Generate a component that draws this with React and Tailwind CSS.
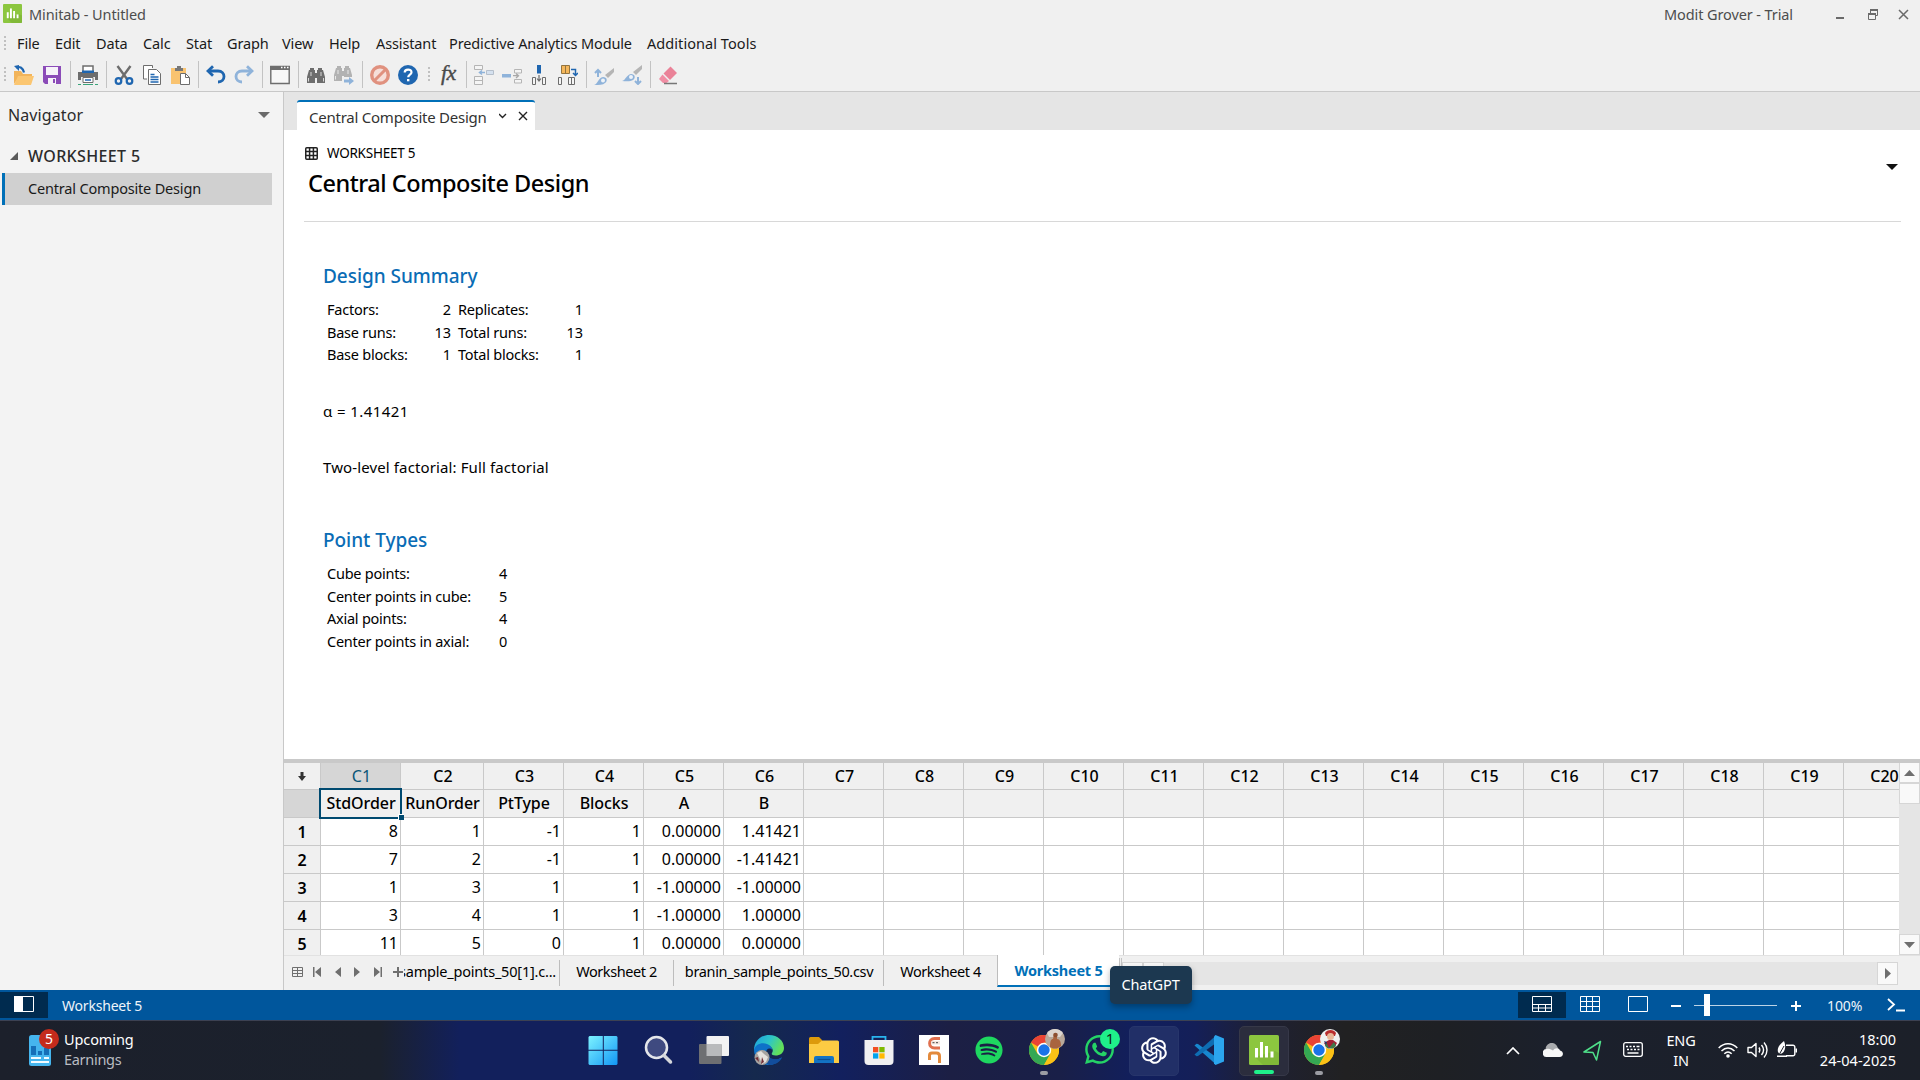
import { AiOutlineOpenAI } from "react-icons/ai";
import { FaSpotify, FaWhatsapp } from "react-icons/fa";

/* ---------- title bar, menu ---------- */

function MinitabLogo({ className }) {
  return (
    <svg viewBox="0 0 30 30" className={className}>
      <rect width="30" height="30" rx="1.5" fill="#8cc63f" />
      <path d="M6 22l8 8h16V18l-4-2z" fill="#79b133" opacity="0.6" />
      <g fill="#fff">
        <rect x="6" y="13" width="3" height="9.5" />
        <rect x="11" y="7" width="3" height="15.5" />
        <rect x="16" y="11" width="3" height="11.5" />
        <rect x="21.500" y="16.500" width="3" height="6" />
      </g>
    </svg>
  );
}

function TitleBar() {
  return (
    <div className="flex h-[29px] shrink-0 items-center bg-[#f0f0f0] pl-[3px] text-[14.5px] tracking-[-0.1px] text-[#4d4d4d]">
      <MinitabLogo className="mt-[-2px] size-[19px]" />
      <span className="ml-[7px]">Minitab - Untitled</span>
      <span className="mr-[42px] ml-auto">Modit Grover - Trial</span>
      <svg width="76" height="16" viewBox="0 0 76 16" className="mr-[9px]" fill="none" stroke="#6a6a6a">
        <path d="M1 11h8" strokeWidth="2" />
        <path d="M33.500 6.500h7v6h-7zM35.500 6V2.500h7v6H41" />
        <path d="M33 7h8M35 3h8" strokeWidth="2" />
        <path d="M64 3l9 9M73 3l-9 9" strokeWidth="1.500" />
      </svg>
    </div>
  );
}

const MENU = [
  ["File", "w-[38px]"],
  ["Edit", "w-[41px]"],
  ["Data", "w-[47px]"],
  ["Calc", "w-[43px]"],
  ["Stat", "w-[41px]"],
  ["Graph", "w-[55px]"],
  ["View", "w-[47px]"],
  ["Help", "w-[47px]"],
  ["Assistant", "w-[73px]"],
  ["Predictive Analytics Module", "w-[198px]"],
  ["Additional Tools", "w-[120px] tracking-[0.06px]"],
];

function Grip({ className }) {
  return (
    <span className={className}>
      <svg width="2" height="14" viewBox="0 0 2 14" fill="#c0c0c0">
        <path d="M0 0h2v2H0zM0 4h2v2H0zM0 8h2v2H0zM0 12h2v2H0z" />
      </svg>
    </span>
  );
}

function MenuBar() {
  return (
    <div className="flex h-[30px] shrink-0 items-center bg-[#f0f0f0] pl-1 text-[14.5px] tracking-[-0.13px] text-[#1a1a1a]">
      <Grip className="mt-[-2px] w-[13px]" />
      {MENU.map(([label, width]) => (
        <span key={label} className={`${width} shrink-0 whitespace-nowrap`}>
          {label}
        </span>
      ))}
    </div>
  );
}

/* ---------- toolbar ---------- */

const BLUE = "#1f66b0";
const SOFT = "#8fb3da";
const GRAY = "#6d6d6d";

const ICONS = {
  open: (
    <>
      <path d="M0 19V6h7l2 3h9v3H5z" fill="#f2b45a" />
      <path d="M4 11h16l-3 9H0z" fill="#fbc671" />
      <path d="M2 2.500c4-1.500 7 .5 8 5" stroke={BLUE} strokeWidth="2.200" fill="none" />
      <path d="M0 1l5-1v6z" fill={BLUE} />
    </>
  ),
  save: (
    <>
      <path d="M1 1h18v18H3l-2-2z" fill="#8b4bb8" />
      <path d="M4 2h12v8H4z" fill="#f6f2f9" />
      <path d="M6 13h8v6H6z" fill="#f6f2f9" />
      <path d="M11 14h2v4h-2z" fill="#8b4bb8" />
    </>
  ),
  print: (
    <>
      <path d="M5 6V1h10v5" fill="#fff" stroke={GRAY} strokeWidth="1.500" />
      <path d="M0 7h20v8h-3v-3H3v3H0z" fill={GRAY} />
      <path d="M4 5.500h12V8H4z" fill={BLUE} />
      <path d="M5 12.500h10v5H5z" fill="#fff" stroke={GRAY} />
      <path d="M7 15h6" stroke={BLUE} strokeWidth="1.500" />
      <path d="M0 19.500h3M5 19.500h10M17 19.500h3" stroke="#3aa37a" />
    </>
  ),
  cut: (
    <>
      <path d="M3.500 1l9.500 13M16.500 1L7 14" stroke={GRAY} strokeWidth="2.400" fill="none" />
      <circle cx="4.500" cy="16" r="2.800" stroke={BLUE} strokeWidth="2.200" fill="none" />
      <circle cx="15.500" cy="16" r="2.800" stroke={BLUE} strokeWidth="2.200" fill="none" />
    </>
  ),
  copy: (
    <>
      <path d="M5 14H1.500V.5h9V3" stroke={GRAY} fill="#fff" />
      <path d="M6.500 4.500h8l4 4v11h-12z" stroke={GRAY} fill="#fff" />
      <path d="M8.500 9.500h4M8.500 12h8M8.500 14.500h8M8.500 17h8" stroke={BLUE} strokeWidth="1.300" />
    </>
  ),
  paste: (
    <>
      <path d="M1 3h15v16H1z" fill="#f9c370" />
      <path d="M5 3h2V1h4v2h2v3H5z" fill="#777" />
      <path d="M10.500 8.500h5l4 4v7h-9z" fill="#fff" stroke={GRAY} />
      <path d="M15.500 8.500v4h4" fill="none" stroke={GRAY} />
    </>
  ),
  undo: (
    <>
      <path d="M2.500 6H12c8 0 8 11 0 11" stroke={BLUE} strokeWidth="2.800" fill="none" />
      <path d="M7 1.200L2 6l5 4.800" stroke={BLUE} strokeWidth="2.800" fill="none" />
    </>
  ),
  redo: (
    <>
      <path d="M17.500 6H8c-8 0-8 11 0 11" stroke={SOFT} strokeWidth="2.800" fill="none" />
      <path d="M13 1.200L18 6l-5 4.800" stroke={SOFT} strokeWidth="2.800" fill="none" />
    </>
  ),
  window: (
    <>
      <path d="M.8 1.500h18.400v17H.8z" fill="#f7f7f7" stroke={GRAY} strokeWidth="1.400" />
      <path d="M0 1h20v4H0z" fill={GRAY} />
      <path d="M11 2.500h1.500M14 2.500h1.500M17 2.500h1.500" stroke="#fff" strokeWidth="1.300" />
    </>
  ),
  find: (
    <g fill={GRAY}>
      <path d="M4 3h4v2h1v13H1v-6l2-7h1zM12 3h4v2h1l2 7v6h-8V5h1z" />
      <path d="M8 8h4v5H8z" />
      <path d="M2.500 13v3.500M17.500 13v3.500M5 7v4M15 7v4" stroke="#d8d8d8" />
    </g>
  ),
  findNext: (
    <>
      <g fill="#b2b2b2">
        <path d="M3 1h4v2h1v13H0v-6l2-7h1zM11 1h4v2h1l2 7v2h-8V3h1z" />
        <path d="M7 6h4v5H7z" />
        <path d="M4 5v4M14 5v4M1.500 11v3.500" stroke="#e8e8e8" />
      </g>
      <path d="M10 14.500h5V12l5 4-5 4v-2.500h-5z" fill={SOFT} />
    </>
  ),
  stop: (
    <>
      <circle cx="10" cy="10" r="8.300" fill="#f6ded9" stroke="#e0917f" strokeWidth="3.400" />
      <path d="M4.500 15.500l11-11" stroke="#e0917f" strokeWidth="3" />
    </>
  ),
  help: (
    <>
      <circle cx="10" cy="10" r="10" fill={BLUE} />
      <path d="M6.700 7.600c0-4 6.800-4 6.800-.3 0 2.500-3.300 2.300-3.300 5" stroke="#fff" strokeWidth="2.200" fill="none" />
      <path d="M9 14h2.400v2.300H9z" fill="#fff" />
    </>
  ),
  i1: (
    <>
      <path d="M.5.500h8v4h-8zM.5 11.500h8v8h-8zM.5 15.500h8" fill="#f5f5f5" stroke="#b5b5b5" />
      <path d="M12.500 5.500h7v4h-7z" fill="#d5e1ef" stroke="#b5bfcb" />
      <path d="M6 7.500h5M8 5.500l-2.500 2 2.500 2" stroke={SOFT} strokeWidth="1.500" fill="none" />
    </>
  ),
  i2: (
    <>
      <path d="M0 9h9v3.500H0z" fill={SOFT} />
      <path d="M12.500 4.500h7v3.500h-7zM12.500 14.500h7V18h-7z" fill="#f5f5f5" stroke="#b5b5b5" />
      <path d="M11 10.700h5M14 8.500l2.500 2.200-2.500 2.200" stroke="#a8a8a8" strokeWidth="1.300" fill="none" />
    </>
  ),
  i3: (
    <>
      <path d="M7 0h4v8.500H7z" fill={BLUE} />
      <path d="M2.500 12.500h3v7h-3zM12.500 12.500h3v7h-3z" fill="#f5f5f5" stroke={GRAY} />
      <path d="M9 10v6M7 13.500L9 16l2-2.500" stroke={GRAY} strokeWidth="1.200" fill="none" />
    </>
  ),
  i4: (
    <>
      <path d="M3.500.5h8v8h-8zM7.500.5v8" fill="#f5b75b" stroke="#94753f" />
      <path d="M.5 12.500h3v7h-3zM10.500 12.500h6v7h-6zM13.500 12.500v7" fill="#f5f5f5" stroke={GRAY} />
      <path d="M13 4.500h4.500V10M15 8l2.500 2.500L20 8" stroke={BLUE} strokeWidth="1.500" fill="none" />
    </>
  ),
  i5: (
    <>
      <path d="M4 12V5M1 8l3-3 3 3" stroke={SOFT} strokeWidth="2" fill="none" />
      <path d="M20 3v4l-6 6-3-3z" fill="#b5b5b5" />
      <path d="M0 20c4-1 4-7 9-8 4 0 5 4 2 6-2 2-6 2-11 2z" fill={SOFT} />
      <circle cx="9" cy="15.500" r="2" fill="#eef3f8" />
    </>
  ),
  i6: (
    <>
      <path d="M20 0v4l-6 6-3-3z" fill="#b5b5b5" />
      <path d="M0 16c4-1 4-6 9-7 4 0 5 4 2 6-2 1.500-6 1.500-11 1z" fill={SOFT} />
      <circle cx="9" cy="12" r="2" fill="#eef3f8" />
      <path d="M16 12v7M13 16l3 3 3-3" stroke={SOFT} strokeWidth="2" fill="none" />
    </>
  ),
  erase: (
    <>
      <path d="M12.500 1.500L19 8l-7 7-6.500-6.500z" fill="#ea8298" />
      <path d="M4.500 9.500l6.500 6.500-2.500 2H5l-4-4z" fill="#f08ea4" />
      <path d="M6 18.500h13" stroke="#777" strokeWidth="1.500" />
    </>
  ),
};

const TOOLS = [
  "open", "save", "|", "print", "|", "cut", "copy", "paste", "|", "undo", "redo", "|", "window", "|",
  "find", "findNext", "|", "stop", "help", "grip", "fx", "|", "i1", "i2", "i3", "i4", "|", "i5", "i6", "|", "erase",
];

function Toolbar() {
  return (
    <div className="flex h-[33px] shrink-0 items-center border-b border-[#c8c8c8] bg-[#f0f0f0] pb-px pl-1">
      <Grip className="mt-[-2px] w-[10px]" />
      {TOOLS.map((name, i) => {
        if (name === "|") return <span key={i} className="h-[27px] w-2 border-l border-[#c3c3c3]" />;
        if (name === "grip") return <Grip key={i} className="mt-[-2px] w-3 pl-[2px]" />;
        if (name === "fx")
          return (
            <span key={i} className="mt-[-3px] mr-2 w-5 pl-[3px] font-['Liberation_Serif',serif] text-[22px] leading-5 tracking-[-0.5px] text-[#4a4a4a] italic [-webkit-text-stroke:0.4px]">
              fx
            </span>
          );
        return (
          <svg key={i} viewBox="0 0 20 20" className="mr-2 size-5 shrink-0">
            {ICONS[name]}
          </svg>
        );
      })}
    </div>
  );
}

/* ---------- navigator ---------- */

function Navigator() {
  return (
    <aside className="w-[284px] shrink-0 border-r border-[#c8c8c8] bg-[#f3f3f3]">
      <div className="flex h-[45px] items-center pl-2 text-base text-[#2b2b2b]">
        <span className="tracking-[0.1px]">Navigator</span>
        <svg width="12" height="6" className="mt-px mr-[13px] ml-auto" fill="#6a6a6a">
          <path d="M0 0h12L6 6z" />
        </svg>
      </div>
      <div className="mt-[4px] mb-[2px] flex h-[30px] items-center pl-[10px]">
        <svg width="8" height="8" fill="#5a5a5a">
          <path d="M8 0v8H0z" />
        </svg>
        <span className="ml-[10px] text-base font-medium tracking-[0.35px] text-[#2b2b2b]">WORKSHEET 5</span>
      </div>
      <div className="mr-[11px] ml-[2px] flex h-8 items-center border-l-3 border-[#0070b8] bg-[#d0d0d0] pl-[23px] text-[14.5px] tracking-[-0.18px] text-[#1a1a1a]">
        Central Composite Design
      </div>
    </aside>
  );
}

/* ---------- report ---------- */

const SUMMARY = [
  ["Factors:", "2", "Replicates:", "1"],
  ["Base runs:", "13", "Total runs:", "13"],
  ["Base blocks:", "1", "Total blocks:", "1"],
];
const POINTS = [
  ["Cube points:", "4"],
  ["Center points in cube:", "5"],
  ["Axial points:", "4"],
  ["Center points in axial:", "0"],
];

function Report() {
  return (
    <section className="flex h-[667px] shrink-0 flex-col bg-white text-black">
      <div className="flex h-[38px] shrink-0 items-end bg-[#e5e5e5] pl-[13px]">
        <div className="flex h-[30px] w-[238px] items-center rounded-t-[3px] border-t-2 border-[#0070b8] bg-white pl-3 text-[15px] tracking-[-0.24px] text-[#333]">
          <span className="mt-[3px] w-[190px] whitespace-nowrap">Central Composite Design</span>
          <svg width="30" height="10" viewBox="0 0 30 10" fill="none" stroke="#222" strokeWidth="1.400">
            <path d="M0 3l3.500 3.500L7 3" />
            <path d="M20 1l8 8M28 1l-8 8" />
          </svg>
        </div>
      </div>
      <div className="mr-[19px] ml-5 flex h-[92px] shrink-0 border-b border-[#d8d8d8]">
        <div className="pt-3">
          <div className="flex h-[22px] items-center pl-px">
            <svg width="13" height="13" viewBox="0 0 13 13" fill="none" stroke="#222" strokeWidth="1.500">
              <rect x="0.750" y="0.750" width="11.500" height="11.500" rx="1" />
              <path d="M4.600 1v11M8.400 1v11M1 4.600h11M1 8.400h11" />
            </svg>
            <span className="ml-[9px] text-[13.500px] tracking-[-0.25px]">WORKSHEET 5</span>
          </div>
          <h1 className="mt-px pl-1 text-[23.500px] leading-9 font-medium tracking-[-0.46px]">Central Composite Design</h1>
        </div>
        <svg width="12" height="7" className="mt-[34px] mr-[3px] ml-auto" fill="#111">
          <path d="M0 0h12L6 6z" />
        </svg>
      </div>
      <div className="pl-[39px] text-[14.5px] leading-[22.500px] tracking-[-0.24px]">
        <h2 className="mt-[40px] text-[19px] leading-7 font-medium tracking-[-0.04px] text-[#0a6cb5]">Design Summary</h2>
        <div className="mt-[8px] grid grid-cols-[94px_30px_7px_94px_31px] pl-1">
          {SUMMARY.map(([a, b, c, d]) => (
            <div key={a} className="contents">
              <span className="whitespace-nowrap">{a}</span>
              <span className="text-right tracking-normal">{b}</span>
              <span />
              <span className="whitespace-nowrap">{c}</span>
              <span className="text-right tracking-normal">{d}</span>
            </div>
          ))}
        </div>
        <p className="mt-[34px] text-[15px] tracking-[0.4px]">α = 1.41421</p>
        <p className="mt-[33.5px] text-[15px] tracking-[0.12px]">Two-level factorial: Full factorial</p>
        <h2 className="mt-[48px] text-[19px] leading-7 font-medium tracking-[-0.04px] text-[#0a6cb5]">Point Types</h2>
        <div className="mt-[8px] grid grid-cols-[152px_30px] pl-1">
          {POINTS.map(([a, b]) => (
            <div key={a} className="contents">
              <span className="whitespace-nowrap">{a}</span>
              <span className="pl-[20px]">{b}</span>
            </div>
          ))}
        </div>
      </div>
    </section>
  );
}

/* ---------- worksheet ---------- */

const COLUMNS = Array.from({ length: 20 }, (_, i) => `C${i + 1}`);
const NAMES = ["StdOrder", "RunOrder", "PtType", "Blocks", "A", "B"];
const ROWS = [
  ["8", "1", "-1", "1", "0.00000", "1.41421"],
  ["7", "2", "-1", "1", "0.00000", "-1.41421"],
  ["1", "3", "1", "1", "-1.00000", "-1.00000"],
  ["3", "4", "1", "1", "-1.00000", "1.00000"],
  ["11", "5", "0", "1", "0.00000", "0.00000"],
];
const colWidth = (i) => (i === 1 ? "w-[83px]" : "w-[80px]");

function Worksheet() {
  return (
    <div className="flex h-[196px] shrink-0 border-t-4 border-[#c9c9c9]">
      <div className="w-[1615px] shrink-0 overflow-hidden bg-white text-base text-black">
        <div className="flex h-[27px] w-max border-b border-[#c9c9c9] bg-[#f0f0f0] font-medium">
          <div className="flex w-[37px] items-center justify-center border-r border-[#c9c9c9]">
            <svg width="8" height="9" fill="#333">
              <path d="M2.500 0h3v4H8L4 9 0 4h2.500z" />
            </svg>
          </div>
          {COLUMNS.map((c, i) => (
            <div
              key={c}
              className={`${colWidth(i)} flex shrink-0 items-center justify-center border-r border-[#c9c9c9] pl-[2px] ${i === 0 ? "bg-[#d6d6d6] font-normal text-[#0b5577]" : ""}`}
            >
              {c}
            </div>
          ))}
        </div>
        <div className="flex h-7 w-max border-b border-[#c9c9c9] bg-[#f0f0f0] font-medium">
          <div className="w-[37px] border-r border-[#c9c9c9] bg-[#d6d6d6]" />
          {COLUMNS.map((c, i) => (
            <div
              key={c}
              className={`${colWidth(i)} relative flex shrink-0 items-center justify-center border-r border-[#c9c9c9] pb-[2px] pl-px tracking-[-0.07px]`}
            >
              {NAMES[i]}
              {i === 0 && (
                <>
                  <span className="absolute -inset-x-[2px] -top-[2px] -bottom-[2px] z-10 border-2 border-[#004a70]" />
                  <span className="absolute -right-[4px] -bottom-[3px] z-10 size-[6px] border-t border-l border-white bg-[#004a70]" />
                </>
              )}
            </div>
          ))}
        </div>
        {ROWS.map((row, r) => (
          <div key={r} className="flex h-7 w-max border-b border-[#c9c9c9]">
            <div className="flex w-[37px] items-center justify-center border-r border-[#c9c9c9] bg-[#f0f0f0] font-semibold">
              {r + 1}
            </div>
            {COLUMNS.map((c, i) => (
              <div key={c} className={`${colWidth(i)} flex shrink-0 items-center justify-end border-r border-[#c9c9c9] pr-[2px] pb-[2px]`}>
                {row[i]}
              </div>
            ))}
          </div>
        ))}
      </div>
      <div className="flex flex-1 flex-col bg-[#e5e5e5]">
        <div className="flex h-[20px] items-center justify-center border border-t-0 border-[#d6d6d6] bg-[#f9f9f9]">
          <svg width="11" height="6" fill="#6f6f6f">
            <path d="M0 6h11L5.500 0z" />
          </svg>
        </div>
        <div className="h-[21px] border border-[#d6d6d6] bg-[#f9f9f9]" />
        <div className="mt-auto flex h-[21px] items-center justify-center border border-[#d6d6d6] bg-[#f9f9f9]">
          <svg width="11" height="6" fill="#6f6f6f">
            <path d="M0 0h11L5.500 6z" />
          </svg>
        </div>
      </div>
    </div>
  );
}

function SheetTabs() {
  return (
    <div className="flex h-[35px] shrink-0 border-t border-[#e2e2e2] bg-[#f0f0f0] text-[14.5px] text-black">
      <svg width="112" height="34" viewBox="0 0 112 34" className="ml-[8px] shrink-0" fill="#6f6f6f">
        <path d="M.5 11.500h10v9h-10zM.5 14.500h10M.5 17.500h10M5.500 11.500v9" fill="none" stroke="#6f6f6f" />
        <path d="M21 11h1.500v10H21zM29 11v10l-6-5zM49 11v10l-6-5zM62 11v10l6-5zM82 11v10l6-5zM88.500 11H90v10h-1.500z" />
        <path d="M101 15h4v-4h2v4h4v2h-4v4h-2v-4h-4z" />
      </svg>
      <div className="my-1 flex w-[156px] items-center overflow-hidden border-r border-[#bdbdbd] pb-[2px] whitespace-nowrap">
        <span className="ml-[-5px] tracking-[-0.2px]">sample_points_50[1].c...</span>
      </div>
      <div className="my-1 flex w-[114px] items-center justify-center border-r border-[#bdbdbd] pb-[2px] tracking-[-0.42px]">Worksheet 2</div>
      <div className="my-1 flex w-[210px] items-center justify-center border-r border-[#bdbdbd] pb-[2px] pl-px tracking-[-0.34px]">
        branin_sample_points_50.csv
      </div>
      <div className="my-1 flex w-[113px] items-center justify-center pb-[2px] tracking-[-0.42px]">Worksheet 4</div>
      <div className="-mt-px mb-[3px] flex w-[122px] items-center justify-center border-b-2 border-l border-b-[#0070b8] border-l-[#bdbdbd] bg-white pt-[2px] text-[14.500px] font-bold tracking-[-0.25px] text-[#0070b8]">
        Worksheet 5
      </div>
      <div className="my-[2px] w-[3px] border-x border-[#c4c4c4]" />
      <div className="mt-[6px] flex h-[23px] w-[776px] shrink-0 bg-[#e5e5e5]">
        <div className="w-[21px] border border-[#d6d6d6] bg-[#f9f9f9]" />
        <div className="w-[21px] border border-[#d6d6d6] bg-[#f9f9f9]" />
        <div className="ml-auto flex w-[21px] items-center justify-center border border-[#d6d6d6] bg-[#f9f9f9]">
          <svg width="6" height="11" fill="#6f6f6f">
            <path d="M0 0v11l6-5.500z" />
          </svg>
        </div>
      </div>
    </div>
  );
}

/* ---------- status bar ---------- */

function StatusBar() {
  return (
    <div className="flex h-[30px] shrink-0 items-center bg-[#00569c] text-[14px] text-[#eef4fa]">
      <div className="flex h-[26px] w-12 items-center justify-center bg-[#002b4f] pb-[2px]">
        <svg width="20" height="16" viewBox="0 0 20 16">
          <path d="M.5.500h19v15H.5z" fill="none" stroke="#fff" />
          <path d="M0 0h9v16H0z" fill="#fff" />
        </svg>
      </div>
      <span className="ml-[14px] tracking-[-0.2px]">Worksheet 5</span>
      <div className="ml-auto flex h-[26px] w-12 items-center justify-center bg-[#002b4f] pb-[2px]">
        <svg width="20" height="16" viewBox="0 0 20 16" fill="none" stroke="#fff">
          <path d="M.5.500h19v15H.5zM0 8.500h20M0 12h20M6.500 8v8M13.500 8v8" />
        </svg>
      </div>
      <svg width="20" height="16" viewBox="0 0 20 16" fill="none" stroke="#fff" className="mb-[2px] ml-[14px]">
        <path d="M.5.500h19v15H.5zM0 5.500h20M0 10.500h20M6.500 0v16M12.500 0v16" />
      </svg>
      <svg width="20" height="16" viewBox="0 0 20 16" fill="none" stroke="#fff" className="mb-[2px] ml-7">
        <path d="M.5.500h19v15H.5z" />
      </svg>
      <span className="mt-[2px] ml-[23px] h-[2px] w-[10px] bg-white" />
      <div className="ml-[13px] flex w-[83px] items-center">
        <span className="h-px w-[10px] bg-[#bcd3e6]" />
        <span className="h-[22px] w-[6px] bg-white" />
        <span className="h-px flex-1 bg-[#bcd3e6]" />
      </div>
      <svg width="10" height="10" className="mt-[2px] ml-[14px]" fill="#fff">
        <path d="M4 0h2v4h4v2H6v4H4V6H0V4h4z" />
      </svg>
      <span className="ml-[26px] w-[60px] tracking-[-0.1px]">100%</span>
      <svg width="18" height="14" viewBox="0 0 18 14" className="mr-[15px]" fill="none" stroke="#fff">
        <path d="M1 1l6 5.500L1 12" strokeWidth="1.800" />
        <path d="M9 12.500h9" strokeWidth="2" />
      </svg>
    </div>
  );
}

/* ---------- taskbar ---------- */

function Chrome() {
  return (
    <svg viewBox="0 0 30 30" className="size-[30px]">
      <circle cx="15" cy="15" r="15" fill="#fbc116" />
      <path d="M15 15L2 7.500A15 15 0 0 1 28 7.500z" fill="#ea4335" />
      <path d="M28 7.500H15v8z" fill="#ea4335" />
      <path d="M2 7.500A15 15 0 0 0 15 30l6.500-11.200L8.500 18.700z" fill="#34a853" />
      <path d="M15 30A15 15 0 0 0 28 7.500H15l6.500 11.200z" fill="#fbc116" />
      <circle cx="15" cy="15" r="7.200" fill="#fff" />
      <circle cx="15" cy="15" r="5.700" fill="#1a73e8" />
    </svg>
  );
}

function AvatarWarm() {
  return (
    <svg viewBox="0 0 20 20" className="absolute top-[3px] right-[4px] size-5">
      <circle cx="10" cy="10" r="10" fill="#b8a89a" />
      <path d="M2 4a10 10 0 0 1 16 0l-3 4H4z" fill="#dcd5cf" />
      <path d="M5 18c0-6 1-8 3-8l1-5h3v5c3 0 4 3 4 7l-4 2.500H8z" fill="#a9643f" />
      <circle cx="10.500" cy="6" r="2.300" fill="#8d4f30" />
    </svg>
  );
}

function AvatarCool() {
  return (
    <svg viewBox="0 0 20 20" className="absolute top-[3px] right-[4px] size-5">
      <circle cx="10" cy="10" r="10" fill="#eef0f0" />
      <path d="M5 4c2-4 9-4 11 0l-1 3H6z" fill="#b92e2e" />
      <circle cx="10.500" cy="7.500" r="3.500" fill="#e8b798" />
      <path d="M4 14l5-3h4l4 3-3 5H7z" fill="#a32135" />
      <path d="M6 13l3 6 5-6 2 4-3 2.500H8L5 17z" fill="#3e7a4b" />
      <path d="M4 12l3 1-1 3z" fill="#27356b" />
    </svg>
  );
}

const APPS = [
  {
    key: "start",
    icon: (
      <svg viewBox="0 0 30 30" className="mr-[3px] size-[30px]">
        <defs>
          <linearGradient id="win" x1="0" y1="0" x2="1" y2="1" gradientUnits="objectBoundingBox">
            <stop offset="0" stopColor="#7df3ff" />
            <stop offset="1" stopColor="#1296f5" />
          </linearGradient>
        </defs>
        <path d="M1.500 1h13.300v13.800H.5V2zM15.800 1h12.700l1 1v12.800H15.800zM.5 15.800h14.300V30H1.500l-1-1zM15.800 15.800h13.700V29l-1 1H15.800z" fill="url(#win)" />
      </svg>
    ),
  },
  {
    key: "search",
    icon: (
      <svg viewBox="0 0 30 30" className="mr-px size-[30px]">
        <circle cx="12.500" cy="12.500" r="10.500" fill="#3f4a80" stroke="#e4e6ea" strokeWidth="2.500" />
        <path d="M20 20.500l6.500 6.500" stroke="#d5d7db" strokeWidth="3.500" strokeLinecap="round" />
      </svg>
    ),
  },
  {
    key: "tasks",
    icon: (
      <svg viewBox="0 0 30 30" className="size-[30px]">
        <rect x="7.500" y="1" width="22.500" height="20" rx="1" fill="#f2f2f3" />
        <rect x="0" y="9" width="22.500" height="20" rx="1" fill="#6e6f72" />
        <path d="M7.500 9h15v12h-15z" fill="#b9babc" />
      </svg>
    ),
  },
  {
    key: "edge",
    icon: (
      <svg viewBox="0 0 30 30" className="size-[30px]">
        <defs>
          <linearGradient id="edge" x1="0" y1="0" x2="1" y2="0.400">
            <stop offset="0" stopColor="#1b9fe0" />
            <stop offset="0.550" stopColor="#2ec6c6" />
            <stop offset="1" stopColor="#62e05a" />
          </linearGradient>
        </defs>
        <path d="M0 15C0 6 7 0 15 0c9 0 15 6 15 13 0 5-4 7.500-8.500 7.500-3 0-4.500-1-3.500-2.500 2-3 0-7-5-7C6 11 1 15 0 15z" fill="url(#edge)" />
        <path d="M0 15c1-5 7-8 13-6 3 1 5 3 5.300 6-3-3-6.300-1-6.300 3 1 6 9 9 16 4-3 5-8 8-13 8C7 30 0 23 0 15z" fill="#0e72c8" />
        <path d="M12 17c1 6 8 9 16 6-3 5-8 7-13 7-5-2-7-8-3-13z" fill="#124d9c" />
        <circle cx="8" cy="22.500" r="7.500" fill="#a6a3a0" />
        <path d="M3 18l4-2 3 3 4 3-2 5-4 2-2-5z" fill="#e4e1dd" />
        <path d="M1 23l3-1 1 5zM8 22l2 5-3 2z" fill="#722f36" />
      </svg>
    ),
  },
  {
    key: "files",
    icon: (
      <svg viewBox="0 0 30 30" className="size-[30px]">
        <path d="M0 3.500A1.500 1.500 0 0 1 1.500 2H10l3 3v6H0z" fill="#dc9a0c" />
        <path d="M0 9h9l4-3.500h15.500A1.500 1.500 0 0 1 30 7v21H0z" fill="#fccb43" />
        <path d="M5 28v-5a2 2 0 0 1 2-2h16a2 2 0 0 1 2 2v5z" fill="#1373c4" />
        <path d="M8.500 24.500h13" stroke="#0b4f93" strokeWidth="1.200" />
      </svg>
    ),
  },
  {
    key: "store",
    icon: (
      <svg viewBox="0 0 30 30" className="size-[30px]">
        <path d="M8.500 6V1.800h13V6" fill="none" stroke="#29b4ee" strokeWidth="1.800" />
        <path d="M.5 5h29v21a4 4 0 0 1-4 4h-21a4 4 0 0 1-4-4z" fill="#f0f0f1" />
        <path d="M9 12h5.300v5.300H9z" fill="#f25022" />
        <path d="M15.300 12h5.300v5.300h-5.300z" fill="#7fba00" />
        <path d="M9 18.300h5.300v5.300H9z" fill="#00a4ef" />
        <path d="M15.300 18.300h5.300v5.300h-5.300z" fill="#ffb900" />
      </svg>
    ),
  },
  {
    key: "hacker",
    icon: (
      <svg viewBox="0 0 30 30" className="size-[30px]">
        <path d="M0 0h30v30H0z" fill="#fff" />
        <path d="M21 3.500h-5.500c-6.500 0-6.500 9.500 0 9.500H21" fill="none" stroke="#e0704f" strokeWidth="3" />
        <path d="M12.500 6h8.500v3.500h-8.500z" fill="#f5e6e0" />
        <path d="M13.500 7.700h2M17 7.700h2" stroke="#444" />
        <path d="M10.500 25v-4.500c0-1.700.8-2.500 2.500-2.500h4.500c2 0 3 1 3 3V28" fill="none" stroke="#e38a3c" strokeWidth="3" />
      </svg>
    ),
  },
  { key: "spotify", icon: <FaSpotify className="size-[28px] text-[#1ed760]" /> },
  { key: "chrome1", icon: <Chrome />, extra: <AvatarWarm />, dot: "w-2 bg-[#9b9ca3]" },
  {
    key: "whatsapp",
    icon: <FaWhatsapp className="size-[33px] text-[#25d366]" />,
    extra: (
      <span className="absolute top-[3px] right-[4px] flex size-5 items-center justify-center rounded-full bg-[#1ff08a] text-[15px] leading-none text-[#10241a]">
        1
      </span>
    ),
  },
  { key: "gpt", icon: <AiOutlineOpenAI className="size-[34px] text-white" />, active: "bg-[#212f67] border-[#27356b]" },
  {
    key: "code",
    icon: (
      <svg viewBox="0 0 30 30" className="size-[30px]">
        <path d="M.5 10.500L2.500 8.800l1.500.1L22 22v7.500z" fill="#1787cf" />
        <path d="M.5 19.500l2 1.700 1.500-.1L22 8V.5z" fill="#0e6db3" />
        <path d="M21.500 0L30 3.500v23L21.500 30l-1.500-1.500V1.500z" fill="#2ba5ee" />
      </svg>
    ),
  },
  {
    key: "minitab",
    icon: <MinitabLogo className="size-[30px]" />,
    active: "bg-[#2b2d3d] border-[#363848]",
    dot: "w-5 bg-[#1ff08a]",
  },
  { key: "chrome2", icon: <Chrome />, extra: <AvatarCool />, dot: "w-2 bg-[#9b9ca3]" },
];

function Taskbar() {
  return (
    <div className="flex h-[60px] shrink-0 items-center border-t border-[#3c4152] bg-[linear-gradient(90deg,#1c202b_0px,#1b212d_380px,#12205c_460px,#12205c_690px,#15294d_755px,#12205e_840px,#1c1f44_950px,#191f48_1060px,#111f5e_1140px,#141f58_1195px,#1e2033_1260px,#212122_1345px,#1e2024_1440px,#1b202c_1560px,#1c2029_1920px)] text-[14.500px] text-white">
      <div className="flex w-[579px] shrink-0 items-center pb-[4px]">
        <div className="relative ml-[29px] h-[40px] w-[35px] pt-[6px]">
          <svg width="22" height="31" viewBox="0 0 22 31">
            <rect width="22" height="31" rx="2.500" fill="#45b5ee" />
            <path d="M2 11h5v9H2zM9 16h4v4H9zM15 13h5v7h-5z" fill="#156fb8" />
            <path d="M2 23h10M15 23h5M2 27h18" stroke="#f2fbff" strokeWidth="2" />
          </svg>
          <span className="absolute top-0 left-[10px] flex h-5 w-5 items-center justify-center rounded-full bg-[#c42b1c] text-[14px] leading-none">
            5
          </span>
        </div>
        <div className="leading-[20px]">
          <div className="tracking-[-0.1px]">Upcoming</div>
          <div className="tracking-[-0.3px] text-[#b9bcc2]">Earnings</div>
        </div>
      </div>
      <div className="flex gap-[5px]">
        {APPS.map((app) => (
          <div
            key={app.key}
            className={`relative flex size-[50px] items-center justify-center rounded-[5px] pb-[2px] ${app.active ? `border ${app.active}` : ""}`}
          >
            {app.icon}
            {app.extra}
            {app.dot && <span className={`absolute bottom-[1px] h-1 rounded-full ${app.dot}`} />}
          </div>
        ))}
      </div>
      <svg width="14" height="8" viewBox="0 0 14 8" className="ml-[162px] shrink-0" fill="none" stroke="#fff" strokeWidth="1.700">
        <path d="M1 7l6-6 6 6" />
      </svg>
      <svg width="20" height="14" viewBox="0 0 20 14" className="mb-[2px] ml-[23px] shrink-0">
        <path d="M3 8a6 6 0 0 1 11.500-4L16 8z" fill="#a9abae" />
        <path d="M4 14a4 4 0 0 1-.5-8c3-1 5 .5 6.500 1.500C12 4.500 16 4.500 17 7.500c4 .5 4 6.500-.5 6.500z" fill="#f7f7f7" />
      </svg>
      <svg width="19" height="21" viewBox="0 0 19 21" className="ml-5 shrink-0" fill="none" stroke="#4fe08a" strokeWidth="1.500" strokeLinejoin="round">
        <path d="M17.500 1.500L1 12l9 .5 3.500 7.500z" />
      </svg>
      <svg width="20" height="15" viewBox="0 0 20 15" className="mb-[2px] ml-[21px] shrink-0" fill="none" stroke="#fff">
        <rect x="0.700" y="0.700" width="18.600" height="13.600" rx="2" strokeWidth="1.300" />
        <path d="M3 4.500h2M6.500 4.500h2M10 4.500h2M13.500 4.500h3M4 7.500h2M7.500 7.500h2M11 7.500h2M14.500 7.500h2M4.500 11h11" strokeWidth="1.400" />
      </svg>
      <div className="ml-[13px] w-[50px] pb-[2px] text-center text-[14.500px] leading-5 tracking-[-0.2px]">
        <div>ENG</div>
        <div>IN</div>
      </div>
      <svg width="20" height="16" viewBox="0 0 20 16" className="mb-[2px] ml-[12px] shrink-0" fill="none" stroke="#fff" strokeWidth="1.500">
        <path d="M.7 6C6 .2 14 .2 19.300 6M3.500 9c4-4 9-4 13 0M6.300 11.800c2.300-2.200 5.100-2.200 7.400 0" />
        <circle cx="10" cy="14" r="1.800" fill="#fff" stroke="none" />
      </svg>
      <svg width="21" height="18" viewBox="0 0 21 18" className="mb-px ml-[9px] shrink-0" fill="none" stroke="#fff" strokeWidth="1.400">
        <path d="M1 6.500v5h3.500L9 15.500v-13L4.500 6.500z" strokeLinejoin="round" />
        <path d="M12 6.500c1 1.500 1 3.500 0 5M14.500 4c2.500 3 2.500 7 0 10M17 1.500c4 4.500 4 10.500 0 15" />
      </svg>
      <svg width="20" height="17" viewBox="0 0 20 17" className="mb-[3px] ml-[9px] shrink-0">
        <path d="M9 4.200h7a1.800 1.800 0 0 1 1.800 1.800v7a1.800 1.800 0 0 1-1.800 1.800H9" fill="none" stroke="#fff" strokeWidth="1.400" />
        <path d="M18.500 7.500h1.500v4h-1.500z" fill="#fff" />
        <path d="M7 0C2 4 0 7 1 11l1.500 2C7 13 10 7 7 0zM0 14.500h10v1.500H0z" fill="#fff" />
        <path d="M2.500 13L7 5" stroke="#1c202a" />
      </svg>
      <div className="mr-6 ml-auto pb-[2px] text-right leading-[20.500px]">
        <div>18:00</div>
        <div className="tracking-[0.05px]">24-04-2025</div>
      </div>
    </div>
  );
}

export default function App() {
  return (
    <div className="relative flex h-[1080px] w-[1920px] flex-col overflow-hidden bg-[#f0f0f0] font-['Noto_Sans','Open_Sans',sans-serif]">
      <TitleBar />
      <MenuBar />
      <Toolbar />
      <div className="flex h-[898px] shrink-0">
        <Navigator />
        <main className="flex w-[1636px] flex-col">
          <Report />
          <Worksheet />
          <SheetTabs />
        </main>
      </div>
      <StatusBar />
      <Taskbar />
      <div className="absolute top-[966px] left-[1110px] flex h-[38px] w-[82px] items-center justify-center rounded-[5px] bg-[#1c3850] pr-px text-[14.500px] tracking-[-0.1px] text-white shadow-[0_3px_6px_rgba(0,0,0,0.3)]">
        ChatGPT
      </div>
    </div>
  );
}
